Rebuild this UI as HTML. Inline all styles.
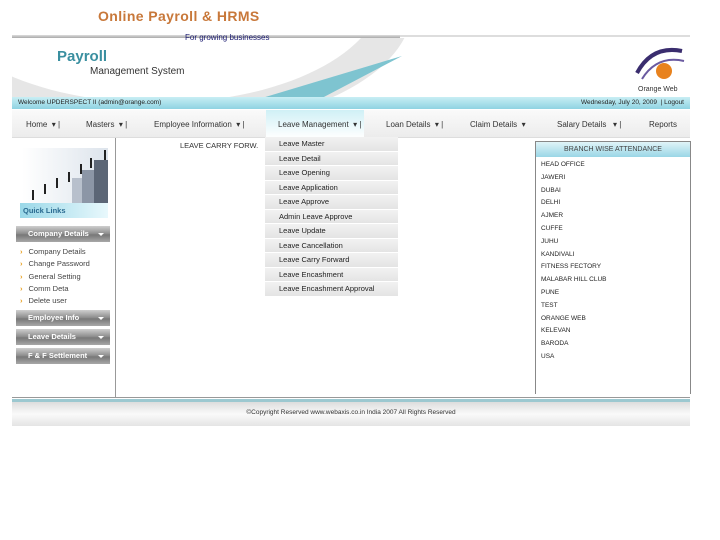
<!DOCTYPE html>
<html><head><meta charset="utf-8"><style>
*{margin:0;padding:0;box-sizing:border-box}
body{width:720px;height:540px;background:#fff;font-family:"Liberation Sans",sans-serif;position:relative;overflow:hidden}
.a{position:absolute}
.nav span{position:absolute;top:120px;font-size:8px;color:#333}
.dd div{height:14.5px;font-size:7.5px;color:#222;padding-left:14px;line-height:14.5px;border-bottom:1px solid #fff;background:linear-gradient(#f2f2f2,#e4e4e4)}
.btn{position:absolute;left:16px;width:94px;height:16px;background:linear-gradient(#cfcfcf,#8a8a8a 50%,#777 55%,#a8a8a8);color:#fff;font-size:7.5px;font-weight:bold;line-height:16px;padding-left:12px}
.btn:after{content:"";position:absolute;right:6px;top:7px;border:3px solid transparent;border-top-color:#fff}
.ql{position:absolute;left:20px;font-size:7.5px;color:#444}
.ql:before{content:"›";color:#e8a020;font-weight:bold;margin-right:6px}
.br div{font-size:6.5px;color:#222;height:12.8px;line-height:12.8px;padding-left:5px}
</style></head><body>
<div class="a" style="left:98px;top:8px;font-size:14px;font-weight:bold;color:#c8783a;letter-spacing:0.4px">Online Payroll &amp; HRMS</div>
<!-- header -->
<div class="a" style="left:12px;top:38px;width:678px;height:60px;background:#fff;overflow:hidden">
<div class="a" style="left:-80px;top:-150px;width:480px;height:240px;border-radius:50%;background:#e6e6e6"></div>
<div class="a" style="left:-80px;top:-160px;width:450px;height:225px;border-radius:50%;background:#fff"></div>
<svg class="a" style="left:250px;top:18px" width="140" height="42"><polygon points="0,42 140,0 60,42" fill="#7ec4d0"/></svg>
<div class="a" style="left:45px;top:10px;font-size:15px;font-weight:bold;color:#3a8fa0">Payroll</div>
<div class="a" style="left:78px;top:28px;font-size:10px;color:#333">Management System</div>
<svg class="a" style="left:620px;top:5px" width="55" height="50"><path d="M5 30 Q20 2 50 8" stroke="#3a2d6e" stroke-width="4" fill="none"/><path d="M10 36 Q25 12 52 18" stroke="#6a5aa0" stroke-width="2" fill="none"/><circle cx="32" cy="28" r="8" fill="#e8821e"/><text x="6" y="48" font-size="7" fill="#333" font-family="Liberation Sans">Orange Web</text></svg>
</div>
<div class="a" style="left:12px;top:35px;width:388px;height:3px;background:linear-gradient(#ddd,#aaa)"></div>
<div class="a" style="left:400px;top:35px;width:290px;height:2px;background:#ddd"></div>
<div class="a" style="left:185px;top:33px;font-size:8px;color:#1a1a70">For growing businesses</div>
<div class="a" style="left:12px;top:97px;width:678px;height:12px;background:linear-gradient(#c8eef4,#8fd3e2);font-size:6.5px;color:#222;line-height:12px;padding-left:6px">Welcome UPDERSPECT II (admin@orange.com)<span style="position:absolute;right:6px">Wednesday, July 20, 2009 &nbsp;| Logout</span></div>
<div class="a" style="left:12px;top:110px;width:678px;height:28px;background:linear-gradient(#fafafa,#ececec);border-bottom:1px solid #ddd"></div>
<div class="a" style="left:266px;top:110px;width:98px;height:28px;background:linear-gradient(#d0f0f6,#fff)"></div>
<div class="nav">
<span style="left:26px">Home &nbsp;▾ |</span><span style="left:86px">Masters &nbsp;▾ |</span><span style="left:154px">Employee Information &nbsp;▾ |</span><span style="left:278px">Leave Management &nbsp;▾ |</span><span style="left:386px">Loan Details &nbsp;▾ |</span><span style="left:470px">Claim Details &nbsp;▾</span><span style="left:557px">Salary Details &nbsp;&nbsp;▾ |</span><span style="left:649px">Reports</span>
</div>
<!-- sidebar -->
<div class="a" style="left:115px;top:138px;width:1px;height:260px;background:#999"></div>
<div class="a" style="left:22px;top:148px;width:86px;height:55px;background:linear-gradient(90deg,#fff,#dde4ec)">
<svg width="86" height="55"><rect x="50" y="30" width="10" height="25" fill="#b8c0cc"/><rect x="60" y="22" width="12" height="33" fill="#8c96a6"/><rect x="72" y="12" width="14" height="43" fill="#5c6676"/><g fill="#222"><rect x="10" y="42" width="2" height="10"/><rect x="22" y="36" width="2" height="10"/><rect x="34" y="30" width="2" height="10"/><rect x="46" y="24" width="2" height="10"/><rect x="58" y="16" width="2" height="10"/><rect x="68" y="10" width="2" height="10"/><rect x="82" y="2" width="2" height="10"/></g></svg></div>
<div class="a" style="left:20px;top:203px;width:88px;height:15px;background:linear-gradient(90deg,#9ad8e8,#e8f8fc);font-size:7.5px;font-weight:bold;color:#2a6a90;line-height:15px;padding-left:3px">Quick Links</div>
<div class="btn" style="top:226px">Company Details</div>
<div class="ql" style="top:247px">Company Details</div>
<div class="ql" style="top:259px">Change Password</div>
<div class="ql" style="top:272px">General Setting</div>
<div class="ql" style="top:284px">Comm Deta</div>
<div class="ql" style="top:296px">Delete user</div>
<div class="btn" style="top:310px">Employee Info</div>
<div class="btn" style="top:329px">Leave Details</div>
<div class="btn" style="top:348px">F &amp; F Settlement</div>
<div class="a" style="left:180px;top:141px;font-size:7.5px;color:#333">LEAVE CARRY FORW.</div>
<div class="a dd" style="left:265px;top:137px;width:133px">
<div>Leave Master</div><div>Leave Detail</div><div>Leave Opening</div><div>Leave Application</div><div>Leave Approve</div><div>Admin Leave Approve</div><div>Leave Update</div><div>Leave Cancellation</div><div>Leave Carry Forward</div><div>Leave Encashment</div><div>Leave Encashment Approval</div></div>
<!-- right panel -->
<div class="a" style="left:535px;top:141px;width:156px;height:253px;border:1px solid #888;border-bottom:none">
<div style="height:15px;background:linear-gradient(#e0f4f8,#9ad6e6);font-size:7px;color:#444;text-align:center;line-height:15px">BRANCH WISE ATTENDANCE</div>
<div class="br" style="padding-top:2px"><div>HEAD OFFICE</div><div>JAWERI</div><div>DUBAI</div><div>DELHI</div><div>AJMER</div><div>CUFFE</div><div>JUHU</div><div>KANDIVALI</div><div>FITNESS FECTORY</div><div>MALABAR HILL CLUB</div><div>PUNE</div><div>TEST</div><div>ORANGE WEB</div><div>KELEVAN</div><div>BARODA</div><div>USA</div></div>
</div>
<!-- footer -->
<div class="a" style="left:12px;top:397px;width:678px;height:1px;background:#999"></div>
<div class="a" style="left:12px;top:399px;width:678px;height:3px;background:#9cc8d0"></div>
<div class="a" style="left:12px;top:402px;width:678px;height:24px;background:linear-gradient(#ddd,#fafafa 50%,#e4e4e4);font-size:6.5px;color:#333;text-align:center;line-height:22px">©Copyright Reserved www.webaxis.co.in India 2007 All Rights Reserved</div>
</body></html>
